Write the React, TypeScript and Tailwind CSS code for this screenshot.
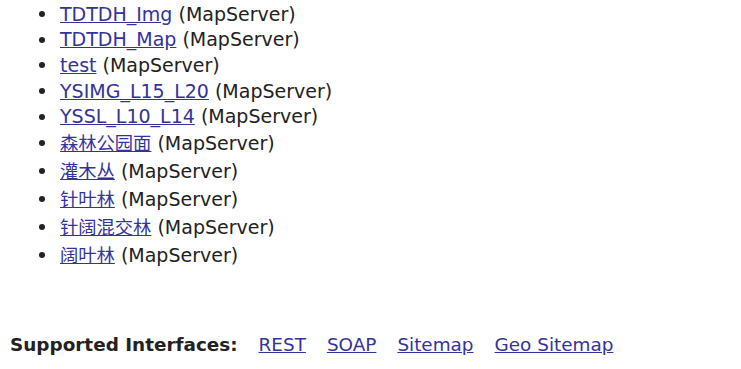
const services = [
  { name: 'TDTDH_Img', cjk: false },
  { name: 'TDTDH_Map', cjk: false },
  { name: 'test', cjk: false },
  { name: 'YSIMG_L15_L20', cjk: false },
  { name: 'YSSL_L10_L14', cjk: false },
  { name: '森林公园面', cjk: true },
  { name: '灌木丛', cjk: true },
  { name: '针叶林', cjk: true },
  { name: '针阔混交林', cjk: true },
  { name: '阔叶林', cjk: true },
];

const interfaces = ['REST', 'SOAP', 'Sitemap', 'Geo Sitemap'];

export default function App() {
  return (
    <div className="w-[741px] h-[369px] overflow-hidden bg-white text-[#222] font-['DejaVu_Sans','Noto_Sans_CJK_SC',sans-serif]">
      <ul className="pt-px text-[19px]">
        {services.map((s) => (
          <li key={s.name} className={`flex items-center ${s.cjk ? 'h-[28px]' : 'h-[25.7px]'}`}>
            <span className="ml-[39px] mr-[15px] w-[6px] h-[6px] rounded-full bg-[#222]" />
            <a href="#" className={`text-[#33339c] underline ${s.cjk ? 'text-[18.3px]' : ''}`}>{s.name}</a>
            <span className="whitespace-pre"> (MapServer)</span>
          </li>
        ))}
      </ul>

      <div className="flex items-center pl-[10px] mt-[63px] leading-[26px] text-[18.4px]">
        <b className="font-bold">Supported Interfaces:</b>
        <div className="flex gap-[21px] ml-[21px]">
          {interfaces.map((i) => (
            <a key={i} href="#" className="text-[#33339c] underline">{i}</a>
          ))}
        </div>
      </div>
    </div>
  );
}
